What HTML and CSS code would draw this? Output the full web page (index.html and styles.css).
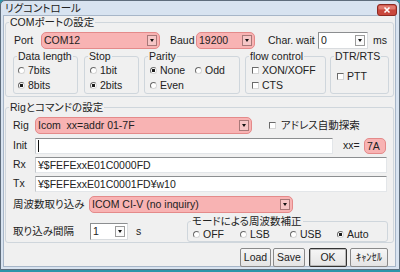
FILE: index.html
```html
<!DOCTYPE html>
<html lang="ja">
<head>
    <meta charset="UTF-8">
    <title>リグコントロール</title>
    <link rel="stylesheet" href="styles.css">
</head>
<body>
<div class="window">
    <!-- Title bar -->
    <div class="titlebar">
        <span class="title">リグコントロール</span>
        <span class="close">
            <svg width="20" height="12" viewBox="0 0 20 12">
                <rect x="0.5" y="0.5" width="19" height="11" rx="2.5" fill="#c9473c" stroke="#8d2a22"/>
                <rect x="1.5" y="1.5" width="17" height="4" rx="1.5" fill="#e07a6f"/>
                <path d="M7.5 3.5 L12.5 8.5 M12.5 3.5 L7.5 8.5" stroke="#fff" stroke-width="1.6"/>
            </svg>
        </span>
    </div>

    <div class="client">
        <!-- COM port settings -->
        <fieldset class="group group-com">
            <legend>COMポートの設定</legend>
            <div class="port-row">
                <span class="label label-port">Port</span>
                <div class="combo hilite combo-port"><span class="value">COM12</span><span class="drop"></span></div>
                <span class="label label-baud">Baud</span>
                <div class="combo hilite combo-baud"><span class="value">19200</span><span class="drop"></span></div>
                <span class="label label-wait">Char. wait</span>
                <div class="combo combo-wait"><span class="value">0</span><span class="drop"></span></div>
                <span class="label label-ms">ms</span>
            </div>
            <div class="sub-row">
                <fieldset class="sub sub-data">
                    <legend>Data length</legend>
                    <div class="opt"><span class="radio"></span>7bits</div>
                    <div class="opt"><span class="radio on"></span>8bits</div>
                </fieldset>
                <fieldset class="sub sub-stop">
                    <legend>Stop</legend>
                    <div class="opt"><span class="radio"></span>1bit</div>
                    <div class="opt"><span class="radio on"></span>2bits</div>
                </fieldset>
                <fieldset class="sub sub-parity">
                    <legend>Parity</legend>
                    <div class="opt-line">
                        <div class="opt opt-none"><span class="radio on"></span>None</div>
                        <div class="opt"><span class="radio"></span>Odd</div>
                    </div>
                    <div class="opt"><span class="radio"></span>Even</div>
                </fieldset>
                <fieldset class="sub sub-flow">
                    <legend>flow control</legend>
                    <div class="opt"><span class="check"></span>XON/XOFF</div>
                    <div class="opt"><span class="check"></span>CTS</div>
                </fieldset>
                <fieldset class="sub sub-dtr">
                    <legend>DTR/RTS</legend>
                    <div class="opt"><span class="check"></span>PTT</div>
                </fieldset>
            </div>
        </fieldset>

        <!-- Rig and command settings -->
        <fieldset class="group group-rig">
            <legend>Rigとコマンドの設定</legend>
            <div class="line line-rig">
                <span class="label label-short">Rig</span>
                <div class="combo hilite combo-rig"><span class="value">Icom&nbsp; xx=addr 01-7F</span><span class="drop"></span></div>
                <div class="opt opt-auto"><span class="check"></span>アドレス自動探索</div>
            </div>
            <div class="line line-init">
                <span class="label label-short">Init</span>
                <div class="field field-init"><span class="caret"></span></div>
                <span class="label label-xx">xx=</span>
                <div class="field hilite field-xx">7A</div>
            </div>
            <div class="line line-rx">
                <span class="label label-short">Rx</span>
                <div class="field field-wide">¥$FEFExxE01C0000FD</div>
            </div>
            <div class="line line-tx">
                <span class="label label-short">Tx</span>
                <div class="field field-wide">¥$FEFExxE01C0001FD¥w10</div>
            </div>
            <div class="line line-freq">
                <span class="label label-freq">周波数取り込み</span>
                <div class="combo hilite combo-freq"><span class="value">ICOM CI-V (no inquiry)</span><span class="drop"></span></div>
            </div>
            <div class="line line-interval">
                <span class="label label-interval">取り込み間隔</span>
                <div class="combo combo-interval"><span class="value">1</span><span class="drop"></span></div>
                <span class="label label-s">s</span>
                <fieldset class="sub sub-mode">
                    <legend>モードによる周波数補正</legend>
                    <div class="opt-line">
                        <div class="opt opt-off"><span class="radio"></span>OFF</div>
                        <div class="opt opt-lsb"><span class="radio"></span>LSB</div>
                        <div class="opt opt-usb"><span class="radio"></span>USB</div>
                        <div class="opt"><span class="radio on"></span>Auto</div>
                    </div>
                </fieldset>
            </div>
        </fieldset>

        <div class="buttons">
            <button class="btn btn-load">Load</button>
            <button class="btn btn-save">Save</button>
            <button class="btn btn-ok">OK</button>
            <button class="btn btn-cancel">ｷｬﾝｾﾙ</button>
        </div>
    </div>
</div>
</body>
</html>
```

FILE: styles.css
```css
* {
    box-sizing: border-box;
}

body {
    margin: 0;
    width: 400px;
    height: 272px;
    overflow: hidden;
    background: #2e95aa;
    font-family: "Liberation Sans", "Noto Sans CJK JP", sans-serif;
    font-size: 10.5px;
    line-height: 13px;
    color: #222;
    font-feature-settings: "palt";
}

/* Window frame */
.window {
    width: 400px;
    height: 270px;
    border: 1px solid #5f6d7c;
    border-radius: 5px 5px 0 0;
    background: #d8e3f0;
}

.titlebar {
    height: 15px;
    display: flex;
    align-items: center;
    justify-content: space-between;
    padding: 0 2px 0 4px;
}

.close {
    display: flex;
    margin-top: 2px;
}

.client {
    margin-left: 3px;
    width: 391px;
    height: 250px;
    background: #f0f0f0;
    box-shadow: 0 0 0 1px #a7b6c8;
}

/* Group boxes */
fieldset {
    margin: 0;
    padding: 0;
    min-width: 0;
    border: 1px solid #cfd6dc;
    border-radius: 3px;
}

legend {
    margin-left: 3px;
    padding: 0 1px;
    line-height: 13px;
    white-space: nowrap;
}

.group {
    margin-left: 1px;
    width: 389px;
}

.group-com {
    padding-bottom: 2px;
}

.group-rig {
    margin-top: 4px;
}

.label {
    line-height: 17px;
    white-space: nowrap;
}

/* Port row */
.port-row {
    display: flex;
    align-items: center;
    margin-top: 3px;
    padding-left: 8px;
}

.label-port { width: 27px; }
.combo-port { width: 119px; }
.label-baud { width: 26px; margin-left: 10px; }
.combo-baud { width: 59px; }
.label-wait { width: 50px; margin-left: 13px; }
.combo-wait { width: 50px; }
.label-ms { margin-left: 5px; }

/* Combo boxes and edits */
.combo {
    display: flex;
    align-items: center;
    height: 17px;
    padding-left: 2px;
    background: #fff;
    border: 1px solid;
    border-color: #8c8e90 #d9dcdf #d9dcdf #8c8e90;
}

.combo .value {
    flex: 1;
    white-space: nowrap;
}

.drop {
    position: relative;
    width: 10px;
    height: 11px;
    margin-right: 2px;
    background: #fbfbfb;
    border: 1px solid #9b9b9b;
}

.drop::after {
    content: "";
    position: absolute;
    left: 2px;
    top: 3px;
    border-left: 2.5px solid transparent;
    border-right: 2.5px solid transparent;
    border-top: 3px solid #111;
}

.field {
    height: 16px;
    padding-left: 2px;
    line-height: 14px;
    background: #fff;
    border: 1px solid;
    border-color: #8c8e90 #e3e6e9 #e3e6e9 #c4c8cc;
    white-space: nowrap;
}

.hilite {
    background: #f8b3b3;
    border: 1px solid #e48a8a;
    border-radius: 5px;
}

.hilite .drop {
    background: #f6c6c6;
    border-color: #a87878;
}

.caret {
    display: inline-block;
    width: 1px;
    height: 12px;
    margin-top: 1px;
    background: #111;
}

/* Small group boxes */
.sub-row {
    display: flex;
    margin-top: 1px;
    padding-left: 7px;
}

.sub {
    height: 44px;
}

.sub-data { width: 65px; }
.sub-stop { width: 55px; margin-left: 6px; }
.sub-parity { width: 96px; margin-left: 5px; }
.sub-flow { width: 81px; margin-left: 5px; }
.sub-dtr { width: 59px; margin-left: 4px; }

.sub-data > .opt { margin-left: 4px; }
.sub-stop > .opt { margin-left: 5px; }
.sub-parity > .opt,
.sub-parity > .opt-line { margin-left: 5px; }
.sub-flow > .opt { margin-left: 6px; }
.sub-dtr > .opt { margin-left: 6px; margin-top: 6px; }

.opt {
    display: flex;
    align-items: center;
    height: 15px;
    gap: 3px;
    white-space: nowrap;
}

.opt-line {
    display: flex;
}

.opt-none { width: 45px; }

.radio {
    width: 7px;
    height: 7px;
    border-radius: 50%;
    border: 1px solid;
    border-color: #6a6a6a #d6d6d6 #d6d6d6 #6a6a6a;
    background: #fff;
}

.radio.on {
    background: radial-gradient(circle, #1a1a1a 0 1.4px, #fff 2px);
}

.check {
    width: 7px;
    height: 7px;
    border: 1px solid;
    border-color: #6a6a6a #d6d6d6 #d6d6d6 #6a6a6a;
    background: #fff;
}

.opt-auto {
    gap: 5px;
    margin-left: 17px;
}

/* Rig rows */
.line {
    display: flex;
    align-items: center;
    padding-left: 7px;
}

.line-rig { margin-top: 3px; }
.line-init { margin-top: 3px; }
.line-rx,
.line-tx { margin-top: 2px; }
.line-freq { margin-top: 4px; }

.label-short { width: 22px; }
.combo-rig { width: 217px; }
.field-init { width: 298px; }
.label-xx { width: 15px; margin-left: 10px; }
.field-xx { width: 22px; margin-left: 6px; }
.field-wide { width: 352px; }

.label-freq { width: 76px; }
.combo-freq { width: 204px; }

.line-interval {
    align-items: flex-start;
    margin-top: 2px;
}

.label-interval { width: 77px; margin-top: 8px; }
.combo-interval { width: 38px; margin-top: 8px; }
.label-s { margin-left: 8px; margin-top: 8px; }

.sub-mode {
    width: 201px;
    height: 27px;
    margin-left: auto;
    margin-right: 5px;
}

.sub-mode .opt-line { margin-left: 5px; }
.sub-mode .opt { height: 13px; }
.opt-off { width: 47px; }
.opt-lsb { width: 50px; }
.opt-usb { width: 47px; }

/* Buttons */
.buttons {
    display: flex;
    justify-content: flex-end;
    margin-top: 5px;
    padding-right: 7px;
}

.btn {
    height: 19px;
    padding: 0;
    font: inherit;
    color: #222;
    white-space: nowrap;
    background: linear-gradient(#f6f6f6, #e4e4e4);
    border: 1px solid #8a8a8a;
    border-radius: 2px;
}

.btn-load { width: 31px; }
.btn-save { width: 32px; margin-left: 2px; }
.btn-ok { width: 38px; margin-left: 4px; border-color: #333; box-shadow: inset 0 0 0 1px #b9b9b9; }
.btn-cancel { width: 38px; margin-left: 3px; }
```
